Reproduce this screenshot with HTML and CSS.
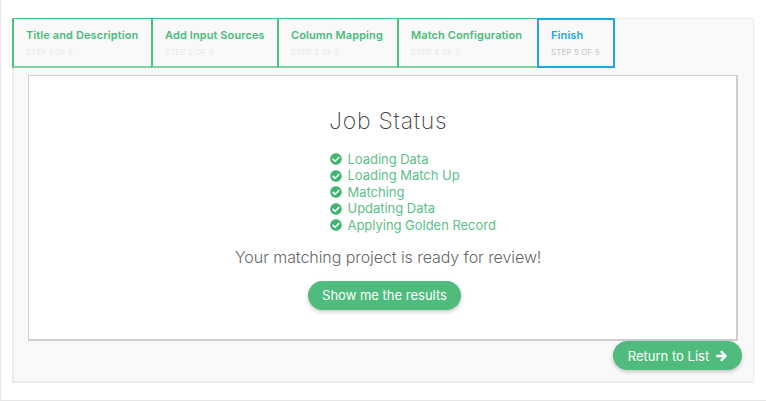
FILE: index.html
```html
<!DOCTYPE html>
<html lang="en">
<head>
<meta charset="utf-8">
<title>Job Status</title>
<link rel="stylesheet" href="styles.css">
</head>
<body>
<div class="page">
  <div class="panel">
    <div class="tabs">
      <div class="tab tab-1"><div class="tab-title">Title and Description</div><div class="tab-step">STEP 1 OF 5</div></div>
      <div class="tab tab-2"><div class="tab-title">Add Input Sources</div><div class="tab-step">STEP 2 OF 5</div></div>
      <div class="tab tab-3"><div class="tab-title">Column Mapping</div><div class="tab-step">STEP 3 OF 5</div></div>
      <div class="tab tab-4"><div class="tab-title">Match Configuration</div><div class="tab-step">STEP 4 OF 5</div></div>
      <div class="tab tab-5 active"><div class="tab-title">Finish</div><div class="tab-step">STEP 5 OF 5</div></div>
    </div>
    <div class="status-box">
      <h1 class="status-title">Job Status</h1>
      <ul class="checks">
        <li><svg class="check" viewBox="0 0 512 512"><path d="M504 256c0 137-111 248-248 248S8 393 8 256 119 8 256 8s248 111 248 248zM227 387l184-184c6-6 6-16 0-22l-23-23c-6-6-16-6-22 0L216 308l-70-70c-6-6-16-6-22 0l-23 23c-6 6-6 16 0 22l104 104c6 6 16 6 22 0z"/></svg>Loading Data</li>
        <li><svg class="check" viewBox="0 0 512 512"><path d="M504 256c0 137-111 248-248 248S8 393 8 256 119 8 256 8s248 111 248 248zM227 387l184-184c6-6 6-16 0-22l-23-23c-6-6-16-6-22 0L216 308l-70-70c-6-6-16-6-22 0l-23 23c-6 6-6 16 0 22l104 104c6 6 16 6 22 0z"/></svg>Loading Match Up</li>
        <li><svg class="check" viewBox="0 0 512 512"><path d="M504 256c0 137-111 248-248 248S8 393 8 256 119 8 256 8s248 111 248 248zM227 387l184-184c6-6 6-16 0-22l-23-23c-6-6-16-6-22 0L216 308l-70-70c-6-6-16-6-22 0l-23 23c-6 6-6 16 0 22l104 104c6 6 16 6 22 0z"/></svg>Matching</li>
        <li><svg class="check" viewBox="0 0 512 512"><path d="M504 256c0 137-111 248-248 248S8 393 8 256 119 8 256 8s248 111 248 248zM227 387l184-184c6-6 6-16 0-22l-23-23c-6-6-16-6-22 0L216 308l-70-70c-6-6-16-6-22 0l-23 23c-6 6-6 16 0 22l104 104c6 6 16 6 22 0z"/></svg>Updating Data</li>
        <li><svg class="check" viewBox="0 0 512 512"><path d="M504 256c0 137-111 248-248 248S8 393 8 256 119 8 256 8s248 111 248 248zM227 387l184-184c6-6 6-16 0-22l-23-23c-6-6-16-6-22 0L216 308l-70-70c-6-6-16-6-22 0l-23 23c-6 6-6 16 0 22l104 104c6 6 16 6 22 0z"/></svg>Applying Golden Record</li>
      </ul>
      <p class="ready">Your matching project is ready for review!</p>
      <button class="pill show-results">Show me the results</button>
    </div>
    <div class="footer">
      <button class="pill return">Return to List<svg class="arrow" viewBox="0 0 448 512"><path d="M190 67l22-22c10-9 25-9 34 0l194 194c9 9 9 25 0 34L246 467c-9 9-24 9-34 0l-22-22c-10-10-9-25 0-35l120-114H24c-13 0-24-11-24-24v-32c0-13 11-24 24-24h286L190 102c-10-10-10-25 0-35z"/></svg></button>
    </div>
  </div>
</div>
</body>
</html>
```
FILE: styles.css
```css
* { box-sizing: border-box; }
html, body { margin: 0; padding: 0; background: #fff; }
body { font-family: Inter, "Open Sans", sans-serif; }
.page {
  width: 766px;
  height: 401px;
  border-left: 1px solid #e6e6e6;
  border-bottom: 1px solid #e6e6e6;
  padding: 18px 12px 0 11px;
}
.panel {
  width: 742px;
  height: 365px;
  background: #f9f9f9;
  border: 1px solid #ececec;
  border-left-width: 2px;
  border-bottom-width: 2px;
}
.tabs { display: flex; height: 50px; margin: -1px 0 0 -2px; }
.tab {
  height: 50px;
  border: 1px solid #4fc07e;
  border-bottom: 2px solid #82d3a3;
  border-left-width: 2px;
  padding: 8px 0 0 12px;
  margin-right: -1px;
}
.tab-1 { width: 140px; }
.tab-2 { width: 127px; }
.tab-3 { width: 121px; }
.tab-4 { width: 141px; }
.tab-5 { width: 78px; }
.tab.active { border: 2px solid #1ea7e6; padding: 7px 0 0 12px; }
.tab-title {
  font-size: 11px;
  font-weight: 600;
  line-height: 17px;
  letter-spacing: .1px;
  color: #4cbb7c;
  white-space: nowrap;
}
.active .tab-title { color: #1ea7e6; }
.tab-step {
  font-size: 8px;
  line-height: 16px;
  letter-spacing: .1px;
  color: #e8e8e8;
  white-space: nowrap;
}
.active .tab-step { color: #c4c4c4; }
.status-box {
  width: 710px;
  height: 266px;
  margin: 7px 0 0 14px;
  background: #fff;
  border: 2px solid #cfcfcf;
  border-width: 1px 2px 2px 1px;
  display: flex;
  flex-direction: column;
}
.status-title {
  margin: 28px 0 0 300px;
  font-size: 23px;
  font-weight: 200;
  line-height: 34px;
  letter-spacing: .75px;
  color: #444;
  white-space: nowrap;
}
.checks {
  list-style: none;
  margin: 12.75px 0 0 300.5px;
  padding: 0;
  font-size: 13px;
  line-height: 16.5px;
  letter-spacing: -.03px;
  color: #5cc08a;
}
.checks li { display: flex; align-items: center; white-space: nowrap; }
.check { width: 12px; height: 12px; margin-right: 6px; fill: #43b573; flex: none; }
.ready {
  margin: 12.25px 0 0 206px;
  font-size: 16px;
  line-height: 22px;
  font-weight: 300;
  letter-spacing: -.07px;
  color: #666;
  white-space: nowrap;
}
.pill {
  font-family: inherit;
  font-size: 13px;
  color: #fff;
  background: #4fbb7c;
  border: none;
  border-radius: 15px;
  height: 29px;
  padding: 0;
  box-shadow: 0 2px 4px rgba(0,0,0,.2);
}
.show-results { width: 153px; margin: 13px 0 0 279px; }
.footer { display: flex; justify-content: flex-end; margin: 0 11px 0 0; }
.return { width: 129px; display: flex; align-items: center; justify-content: center; }
.arrow { width: 11px; height: 12px; margin-left: 7px; fill: #fff; stroke: #fff; stroke-width: 30; }
```
